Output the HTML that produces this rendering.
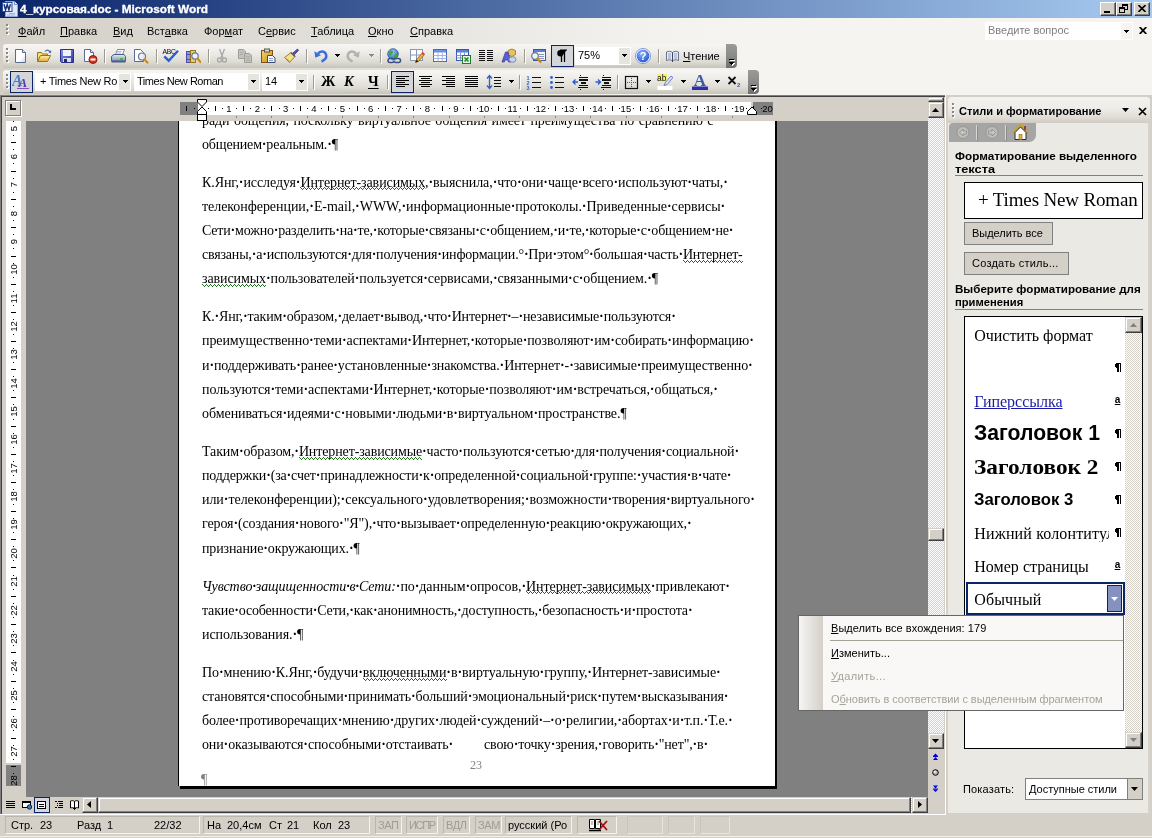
<!DOCTYPE html><html lang="ru"><head><meta charset="utf-8"><title>4_курсовая.doc - Microsoft Word</title><style>
*{box-sizing:border-box;margin:0;padding:0}
html,body{width:1152px;height:838px;overflow:hidden;background:#d4d0c8}
body{position:relative;font-family:"Liberation Sans",sans-serif;font-size:11px;color:#000}
.a{position:absolute}
.t{position:absolute;white-space:nowrap;line-height:1}
u{text-decoration:underline;text-underline-offset:1px}
#title{left:0;top:0;width:1152px;height:18px;background:linear-gradient(90deg,#0a246a 0%,#a6caf0 100%)}
#menubar{left:0;top:18px;width:1152px;height:26px;background:linear-gradient(90deg,#d4d0c8 0%,#dcd9d2 20%,#e9e7e2 40%,#f2f1ed 55%,#f5f4f1 64%,#f5f4f1 100%)}
.cap{position:absolute;top:2px;width:16px;height:14px;background:#d4d0c8;border:1px solid;border-color:#fff #404040 #404040 #fff;box-shadow:inset -1px -1px 0 #808080}
.grip{position:absolute;width:2px;height:2px;background:#8a8880;box-shadow:1px 1px 0 #fff}
.doc{font-family:"Liberation Serif",serif;font-size:14px;color:#000}
.sq{}
</style></head><body><div id="root" style="position:absolute;left:0;top:0;width:1152px;height:838px;will-change:transform">
<div class="a" id="title"></div>
<svg class="a" style="left:1px;top:0px" width="18" height="18" viewBox="0 0 18 18">
<path d="M4.500 1.500h9l3 3v12h-12z" fill="#dfe8fb" stroke="#8ea4d8" stroke-width="1"/>
<path d="M13.500 1.500v3h3" fill="#f4f7ff" stroke="#5a72b4" stroke-width="0.800"/>
<path d="M8 13.500h6M6 15h8" stroke="#9fb2e0" stroke-width="1"/>
<rect x="1.500" y="2.500" width="9.500" height="9" fill="#f2f6ff" stroke="#2c4c9c" stroke-width="1"/>
<path d="M3 4.300l1.500 5.400 1.700-5 1.700 5 1.500-5.400" fill="none" stroke="#17327e" stroke-width="1.500"/>
</svg>
<div class="t" style="left:20px;top:4px;font-weight:bold;color:#fff;font-size:11px;-webkit-text-stroke:0.300px #fff" id="ttl">4_курсовая.doc - Microsoft Word</div>
<div class="cap" style="left:1100px"><div class="a" style="left:3px;top:8px;width:6px;height:2px;background:#000"></div></div>
<div class="cap" style="left:1116px"><svg class="a" style="left:2px;top:1px" width="10" height="10" viewBox="0 0 10 10" shape-rendering="crispEdges"><rect x="3" y="0" width="6" height="2" fill="#000"/><rect x="3" y="0" width="1" height="5" fill="#000"/><rect x="8" y="0" width="1" height="6" fill="#000"/><rect x="3" y="5" width="6" height="1" fill="#000"/><rect x="0" y="3" width="6" height="6" fill="#d4d0c8"/><rect x="0" y="3" width="6" height="2" fill="#000"/><rect x="0" y="3" width="1" height="6" fill="#000"/><rect x="5" y="3" width="1" height="6" fill="#000"/><rect x="0" y="8" width="6" height="1" fill="#000"/></svg></div>
<div class="cap" style="left:1134px"><svg class="a" style="left:3px;top:2px" width="8" height="7" viewBox="0 0 8 7"><path d="M0.5 0L7.5 7M7.5 0L0.5 7" stroke="#000" stroke-width="1.6"/></svg></div>
<div class="a" id="menubar"></div>
<div class="grip" style="left:6px;top:24px"></div>
<div class="grip" style="left:6px;top:28px"></div>
<div class="grip" style="left:6px;top:32px"></div>
<div class="t" id="m0" style="left:18px;top:26px"><u>Ф</u>айл</div>
<div class="t" id="m1" style="left:60px;top:26px"><u>П</u>равка</div>
<div class="t" id="m2" style="left:113px;top:26px"><u>В</u>ид</div>
<div class="t" id="m3" style="left:147px;top:26px">Вст<u>а</u>вка</div>
<div class="t" id="m4" style="left:204px;top:26px">Фор<u>м</u>ат</div>
<div class="t" id="m5" style="left:258px;top:26px">С<u>е</u>рвис</div>
<div class="t" id="m6" style="left:311px;top:26px"><u>Т</u>аблица</div>
<div class="t" id="m7" style="left:368px;top:26px"><u>О</u>кно</div>
<div class="t" id="m8" style="left:410px;top:26px"><u>С</u>правка</div>
<div class="a" style="left:985px;top:22px;width:148px;height:18px;background:#fff"></div>
<div class="t" id="ask" style="left:988px;top:25px;color:#808080">Введите вопрос</div>
<div class="a" style="left:1121px;top:23px;width:11px;height:16px;background:#f5f4f1"></div>
<svg class="a" style="left:1124px;top:30px" width="5" height="3" shape-rendering="crispEdges"><rect x="0" y="0" width="5" height="1"/><rect x="1" y="1" width="3" height="1"/><rect x="2" y="2" width="1" height="1"/></svg>
<svg class="a" style="left:1139px;top:27px" width="8" height="7" viewBox="0 0 8 7"><path d="M0.700 0L7.300 7M7.300 0L0.700 7" stroke="#000" stroke-width="1.800"/></svg>
<style>
.tb{position:absolute;height:24px;border-radius:3px 0 0 3px;background:linear-gradient(180deg,#f7f6f3 0%,#efeeea 30%,#dedbd4 75%,#c6c3ba 100%)}
.tbcap{position:absolute;width:11px;height:24px;border-radius:0 4px 4px 0;background:linear-gradient(180deg,#9a9a98 0%,#8a8a88 50%,#707070 100%)}
.sep{position:absolute;width:1px;height:14px;background:#9d9a90;box-shadow:1px 1px 0 #fff}
.ic{position:absolute;width:16px;height:16px}
.sel{position:absolute;background:#d4d5d8;border:1px solid #0a246a}
.cb{position:absolute;background:#fff;height:18px}
.cbb{position:absolute;width:11px;height:16px;background:#e6e4de}
.dd{position:absolute;width:7px;height:4px}
</style>
<div class="a" style="left:0;top:44px;width:1152px;height:52px;background:linear-gradient(90deg,#d4d0c8 0%,#dcd9d2 20%,#e9e7e2 40%,#f2f1ed 55%,#f5f4f1 64%,#f5f4f1 100%)"></div>
<div class="tb" style="left:3px;top:44px;width:723px"></div><div class="tbcap" style="left:726px;top:44px"></div>
<div class="tb" style="left:3px;top:70px;width:745px"></div><div class="tbcap" style="left:748px;top:70px"></div>
<div class="grip" style="left:6px;top:48px"></div>
<div class="grip" style="left:6px;top:52px"></div>
<div class="grip" style="left:6px;top:56px"></div>
<div class="grip" style="left:6px;top:60px"></div>
<div class="grip" style="left:6px;top:74px"></div>
<div class="grip" style="left:6px;top:78px"></div>
<div class="grip" style="left:6px;top:82px"></div>
<div class="grip" style="left:6px;top:86px"></div>
<svg class="a" style="left:728px;top:58px" width="9" height="9" viewBox="0 0 9 9" shape-rendering="crispEdges"><g fill="#fff" transform="translate(1,1)"><rect x="1" y="1" width="5" height="1"/><rect x="1" y="4" width="5" height="1"/><rect x="2" y="5" width="3" height="1"/><rect x="3" y="6" width="1" height="1"/></g><g fill="#000"><rect x="1" y="1" width="5" height="1"/><rect x="1" y="4" width="5" height="1"/><rect x="2" y="5" width="3" height="1"/><rect x="3" y="6" width="1" height="1"/></g></svg>
<svg class="a" style="left:750px;top:84px" width="9" height="9" viewBox="0 0 9 9" shape-rendering="crispEdges"><g fill="#fff" transform="translate(1,1)"><rect x="1" y="1" width="5" height="1"/><rect x="1" y="4" width="5" height="1"/><rect x="2" y="5" width="3" height="1"/><rect x="3" y="6" width="1" height="1"/></g><g fill="#000"><rect x="1" y="1" width="5" height="1"/><rect x="1" y="4" width="5" height="1"/><rect x="2" y="5" width="3" height="1"/><rect x="3" y="6" width="1" height="1"/></g></svg>
<svg width="0" height="0" style="position:absolute"><defs>
<linearGradient id="gpage" x1="0" y1="0" x2="1" y2="1"><stop offset="0" stop-color="#fff"/><stop offset="0.6" stop-color="#fff"/><stop offset="1" stop-color="#c9d3ea"/></linearGradient>
<linearGradient id="gfold" x1="0" y1="0" x2="0" y2="1"><stop offset="0" stop-color="#fff3b0"/><stop offset="1" stop-color="#e5a82a"/></linearGradient>
<linearGradient id="gblue" x1="0" y1="0" x2="1" y2="1"><stop offset="0" stop-color="#8f9ae8"/><stop offset="1" stop-color="#2b35a8"/></linearGradient>
<linearGradient id="gprn" x1="0" y1="0" x2="0" y2="1"><stop offset="0" stop-color="#e8edf6"/><stop offset="1" stop-color="#7f93bb"/></linearGradient>
<radialGradient id="ghelp" cx="0.4" cy="0.3" r="0.8"><stop offset="0" stop-color="#8fb4ff"/><stop offset="1" stop-color="#1546c8"/></radialGradient>
<radialGradient id="gglobe" cx="0.4" cy="0.3" r="0.8"><stop offset="0" stop-color="#9fd0ff"/><stop offset="1" stop-color="#2560b8"/></radialGradient>
<linearGradient id="gclip" x1="0" y1="0" x2="1" y2="1"><stop offset="0" stop-color="#f5d66a"/><stop offset="1" stop-color="#c98a1a"/></linearGradient>
</defs></svg>
<svg class="a" style="left:13px;top:48px" width="16" height="16" viewBox="0 0 16 16"><path d="M2.5 1.5h7l3 3v10h-10z" fill="url(#gpage)" stroke="#5a6a94"/><path d="M9.5 1.5v3h3" fill="#dfe5f4" stroke="#5a6a94"/></svg>
<svg class="a" style="left:36px;top:48px" width="16" height="16" viewBox="0 0 16 16"><path d="M1.5 13.5v-9h4l1 1.5h5v2" fill="#f7dc7a" stroke="#9a7418"/><path d="M1.5 13.5l3-6h10l-3 6z" fill="url(#gfold)" stroke="#9a7418"/><path d="M9 3.500c1.500-2 4-2 5 0.500" fill="none" stroke="#5a6a94" stroke-width="1.200"/><path d="M15.300 2.300l-0.300 3-2.700-1z" fill="#5a6a94"/></svg>
<svg class="a" style="left:59px;top:48px" width="16" height="16" viewBox="0 0 16 16"><path d="M1.500 1.500h13v13h-12l-1-1z" fill="url(#gblue)" stroke="#2a2f8a"/><rect x="4" y="2" width="8" height="6" fill="#f0f2fb"/><rect x="4" y="10" width="8" height="4" fill="#d8dbe8"/><rect x="5" y="11" width="3" height="3" fill="#23286a"/></svg>
<svg class="a" style="left:82px;top:48px" width="16" height="16" viewBox="0 0 16 16"><path d="M2.500 1.500h6l3 3v9h-9z" fill="url(#gpage)" stroke="#5a6a94"/><path d="M8.500 1.500v3h3" fill="#dfe5f4" stroke="#5a6a94"/><circle cx="11" cy="11.500" r="4" fill="#d8321e" stroke="#8c1a10"/><rect x="8.500" y="10.500" width="5" height="2" fill="#fff"/></svg>
<div class="sep" style="left:104px;top:49px"></div>
<svg class="a" style="left:110px;top:48px" width="16" height="16" viewBox="0 0 16 16"><path d="M5.500 6.500l2-5h7l-2 5z" fill="#fff" stroke="#6a7690" stroke-width="0.900"/><path d="M7.500 3.500h4M7 5h4" stroke="#9aa4bc" stroke-width="0.800"/><path d="M1.500 8.500l2.500-2h10l1.500 2v4.500h-14z" fill="url(#gprn)" stroke="#4a5a84"/><path d="M1.500 13h14v1.500h-14z" fill="#4a5a84"/><rect x="10" y="10" width="3" height="2" fill="#35c035"/></svg>
<svg class="a" style="left:133px;top:48px" width="16" height="16" viewBox="0 0 16 16"><path d="M1.500 1.500h6l3 3v9h-9z" fill="url(#gpage)" stroke="#5a6a94"/><circle cx="9" cy="8.500" r="3.500" fill="#e8f0fb" fill-opacity="0.900" stroke="#6a7690" stroke-width="1.200"/><path d="M11.500 11.500l3 3" stroke="#c98a1a" stroke-width="2.200" stroke-linecap="round"/></svg>
<div class="sep" style="left:156px;top:49px"></div>
<svg class="a" style="left:162px;top:48px" width="17" height="16" viewBox="0 0 17 16"><text x="0.500" y="5.800" font-family="Liberation Sans,sans-serif" font-size="6.800" fill="#000" textLength="13.500">ABC</text><path d="M2.300 8.400l4.400 4.300 9.300-10" fill="none" stroke="#2a5fd0" stroke-width="2.400"/></svg>
<svg class="a" style="left:185px;top:48px" width="16" height="16" viewBox="0 0 16 16"><rect x="1.500" y="3.500" width="4" height="11" fill="#8f95e4" stroke="#4a4fa8"/><rect x="5.500" y="2.500" width="5" height="12" fill="#e8c878" stroke="#9a7418"/><path d="M1.500 6.500h4M1.500 11.500h4" stroke="#4a4fa8"/><circle cx="10" cy="8" r="3.200" fill="#eaf2fc" stroke="#6a7690" stroke-width="1.200"/><path d="M12.500 10.500l3 3.500" stroke="#c98a1a" stroke-width="2.200" stroke-linecap="round"/></svg>
<div class="sep" style="left:208px;top:49px"></div>
<svg class="a" style="left:214px;top:48px" width="16" height="16" viewBox="0 0 16 16"><path d="M5.500 1l3.500 9M10.500 1l-3.500 9" stroke="#a8a8a4" stroke-width="1.300" fill="none"/><circle cx="5.500" cy="12" r="2" fill="none" stroke="#a8a8a4" stroke-width="1.300"/><circle cx="10.500" cy="12" r="2" fill="none" stroke="#a8a8a4" stroke-width="1.300"/></svg>
<svg class="a" style="left:237px;top:48px" width="16" height="16" viewBox="0 0 16 16"><path d="M1.500 1.500h5l2 2v7h-7z" fill="#c4c2bc" stroke="#a09e98"/><path d="M7.500 5.500h5l2 2v7h-7z" fill="#c4c2bc" stroke="#a09e98"/><path d="M3 4.500h3M3 6.500h3M9 8.500h4M9 10.500h4M9 12.500h4" stroke="#a8a6a0" stroke-width="0.800"/></svg>
<svg class="a" style="left:260px;top:48px" width="16" height="16" viewBox="0 0 16 16"><rect x="1.500" y="2.500" width="11" height="12" fill="url(#gclip)" stroke="#7a5410"/><rect x="4.500" y="1" width="5" height="3" fill="#d8d8d8" stroke="#555"/><path d="M7.500 7.500h5l2.500 2.500v4.500h-7.500z" fill="#f4f6fb" stroke="#3a4a74"/><path d="M9 10.500h4M9 12.500h4" stroke="#7f93bb" stroke-width="0.900"/></svg>
<svg class="a" style="left:283px;top:48px" width="16" height="16" viewBox="0 0 16 16"><path d="M10 5l4.500-4 1 1.500-4 4z" fill="#5a4fb8" stroke="#3a2f88" stroke-width="0.800"/><path d="M1.500 9.500l6.500-5 4 4-5.500 6z" fill="#f3e08a" stroke="#9a8428"/><path d="M3.500 10.500l4 3.500" stroke="#b89a38" stroke-width="0.800"/><path d="M8 4.500l4 4" stroke="#555" stroke-width="1.400"/></svg>
<div class="sep" style="left:306px;top:49px"></div>
<svg class="a" style="left:312px;top:48px" width="16" height="16" viewBox="0 0 16 16"><path d="M9.500 13.500C13 12 15 9.500 14 6.500C13 3 8.500 2.200 5.800 5.800" fill="none" stroke="#3c6ee0" stroke-width="2.500"/><path d="M2.300 3.200l1 6.600 5.700-2.600z" fill="#3c6ee0"/></svg>
<svg class="a" style="left:335px;top:54px" width="5" height="3" shape-rendering="crispEdges"><rect x="0" y="0" width="5" height="1" fill="#000"/><rect x="1" y="1" width="3" height="1" fill="#000"/><rect x="2" y="2" width="1" height="1" fill="#000"/></svg>
<svg class="a" style="left:346px;top:48px" width="16" height="16" viewBox="0 0 16 16"><path d="M6.500 13.500C3 12 1 9.500 2 6.500C3 3 7.500 2.200 10.200 5.800" fill="none" stroke="#b4b2ac" stroke-width="2.500"/><path d="M13.700 3.200l-1 6.600-5.700-2.600z" fill="#b4b2ac"/></svg>
<svg class="a" style="left:369px;top:54px" width="5" height="3" shape-rendering="crispEdges"><rect x="0" y="0" width="5" height="1" fill="#8c8a84"/><rect x="1" y="1" width="3" height="1" fill="#8c8a84"/><rect x="2" y="2" width="1" height="1" fill="#8c8a84"/></svg>
<div class="sep" style="left:380px;top:49px"></div>
<svg class="a" style="left:386px;top:48px" width="16" height="16" viewBox="0 0 16 16"><circle cx="7" cy="6" r="5.300" fill="url(#gglobe)" stroke="#2a4f98" stroke-width="0.800"/><path d="M4 3c2-1 3 0 3 1.500s-2 1-2 3-2 0-2-1.500 0-2.300 1-3zM9 6c1-1 2.500 0 2.500 1.500s-1.500 2.500-2.500 2.500-1-3 0-4z" fill="#3fa83f"/><rect x="2" y="10.500" width="6" height="4" rx="2" fill="none" stroke="#3a4f84" stroke-width="1.500"/><rect x="8" y="10.500" width="6.500" height="4" rx="2" fill="none" stroke="#3a4f84" stroke-width="1.500"/><path d="M6 12.500h4" stroke="#9ab0e0" stroke-width="1.200"/></svg>
<svg class="a" style="left:409px;top:48px" width="16" height="16" viewBox="0 0 16 16"><rect x="1.500" y="1.500" width="12" height="11" fill="#fff" stroke="#8a96b6"/><path d="M1.500 7h12M7.500 1.500v11" stroke="#8a96b6"/><path d="M6.500 14.500l1-3 6-7 2 2-6 7z" fill="#f0b040" stroke="#8a5a10" stroke-width="0.800"/><path d="M13 4.500l2 2" stroke="#d84a3a" stroke-width="2"/><path d="M6.500 14.500l1-3 2 2z" fill="#222"/></svg>
<svg class="a" style="left:432px;top:48px" width="16" height="16" viewBox="0 0 16 16"><rect x="1.500" y="1.500" width="13" height="12" fill="#fff" stroke="#4a68c0"/><rect x="2" y="2" width="12" height="2.500" fill="#6a8fe8"/><path d="M1.500 7.500h13M1.500 10.500h13M6 4.500v9M10.300 4.500v9" stroke="#a4b6e4"/></svg>
<svg class="a" style="left:455px;top:48px" width="16" height="16" viewBox="0 0 16 16"><rect x="1.500" y="1.500" width="12" height="11" fill="#fff" stroke="#3a57b0"/><rect x="2" y="2" width="11" height="2.500" fill="#5a7fe0"/><path d="M1.500 7.500h12M1.500 10h12M5.500 4.500v8M9.500 4.500v8" stroke="#7f95d0"/><rect x="7.500" y="7.500" width="8" height="8" fill="#eaf5ea" stroke="#1f7a2a"/><path d="M9.500 9.500l4 4M13.500 9.500l-4 4" stroke="#1f8a2a" stroke-width="1.600"/></svg>
<svg class="a" style="left:478px;top:48px" width="16" height="16" viewBox="0 0 16 16"><rect x="1" y="2" width="6" height="1" fill="#111"/><rect x="9" y="2" width="6" height="1" fill="#111"/><rect x="1" y="4" width="6" height="1" fill="#111"/><rect x="9" y="4" width="6" height="1" fill="#111"/><rect x="1" y="6" width="6" height="1" fill="#111"/><rect x="9" y="6" width="6" height="1" fill="#111"/><rect x="1" y="8" width="6" height="1" fill="#111"/><rect x="9" y="8" width="6" height="1" fill="#111"/><rect x="1" y="10" width="6" height="1" fill="#111"/><rect x="9" y="10" width="6" height="1" fill="#111"/><rect x="1" y="12" width="6" height="1" fill="#111"/><rect x="9" y="12" width="6" height="1" fill="#111"/></svg>
<svg class="a" style="left:501px;top:48px" width="16" height="16" viewBox="0 0 16 16"><path d="M7 2.500l4-1.500 3.500 1.500v4l-3.500 2-4-1.500z" fill="#e8c060" stroke="#9a7418" stroke-width="0.800"/><path d="M1 14l3.500-10h2.500l3 10h-2.500l-0.500-2h-3l-0.700 2z" fill="#5a5fd0" stroke="#33389a" stroke-width="0.700"/><ellipse cx="11.500" cy="11.500" rx="3.500" ry="2.800" fill="#c8d4ea" stroke="#6a7aa4" stroke-width="0.800"/></svg>
<div class="sep" style="left:524px;top:49px"></div>
<svg class="a" style="left:530px;top:48px" width="16" height="16" viewBox="0 0 16 16"><rect x="3.500" y="1.500" width="12" height="11" fill="#f4f6fb" stroke="#3a57b0"/><rect x="4" y="2" width="11" height="2" fill="#5a7fe0"/><path d="M9 6.500h5M9 8.500h5M9 10.500h5" stroke="#8a96b6"/><circle cx="5" cy="8" r="3.300" fill="#eaf2fc" stroke="#6a7690" stroke-width="1.200"/><path d="M7.500 10.500l3 3.500" stroke="#c98a1a" stroke-width="2.200" stroke-linecap="round"/></svg>
<div class="sel" style="left:551px;top:45px;width:23px;height:22px"></div>
<svg class="a" style="left:554px;top:48px" width="16" height="16" viewBox="0 0 16 16"><path d="M10.500 2v12M7.500 2v12" stroke="#000" stroke-width="1.300"/><path d="M12.500 2h-6a3.200 3.200 0 0 0 0 6.500h1.500z" fill="#000"/><path d="M6 2h7" stroke="#000" stroke-width="1"/></svg>
<div class="cb" style="left:575px;top:47px;width:56px"></div><div class="cbb" style="left:619px;top:48px"></div>
<div class="t" id="zm" style="left:578px;top:50px">75%</div>
<svg class="a" style="left:622px;top:54px" width="5" height="3" shape-rendering="crispEdges"><rect x="0" y="0" width="5" height="1" fill="#000"/><rect x="1" y="1" width="3" height="1" fill="#000"/><rect x="2" y="2" width="1" height="1" fill="#000"/></svg>
<svg class="a" style="left:635px;top:48px" width="16" height="16" viewBox="0 0 16 16"><circle cx="8" cy="8" r="7" fill="url(#ghelp)" stroke="#fff" stroke-width="1.200"/><circle cx="8" cy="8" r="7.600" fill="none" stroke="#5a7fd8" stroke-width="0.700"/><text x="8" y="12" text-anchor="middle" font-family="Liberation Sans,sans-serif" font-weight="bold" font-size="11" fill="#fff">?</text></svg>
<div class="sep" style="left:658px;top:49px"></div>
<svg class="a" style="left:666px;top:50px" width="13" height="13" viewBox="0 0 13 13"><path d="M0.500 2c2-1 4.500-1 6 0.500v8.500c-1.500-1.500-4-1.500-6-0.500z" fill="#e8ecf6" stroke="#5a6684" stroke-width="0.900"/><path d="M12.500 2c-2-1-4.500-1-6 0.500v8.500c1.500-1.500 4-1.500 6-0.500z" fill="#e8ecf6" stroke="#5a6684" stroke-width="0.900"/><path d="M2 4h3M2 6h3M2 8h3M8 4h3M8 6h3M8 8h3" stroke="#8a94b4" stroke-width="0.900"/><path d="M6.500 2.500v9.500" stroke="#3a4464" stroke-width="1"/></svg>
<div class="t" id="rd" style="left:683px;top:51px"><u>Ч</u>тение</div>
<div class="sel" style="left:10px;top:71px;width:23px;height:22px"></div>
<svg class="a" style="left:12px;top:73px" width="18" height="17" viewBox="0 0 18 17"><text x="0" y="12.500" font-family="Liberation Serif,serif" font-style="italic" font-weight="bold" font-size="16" fill="#4a7ad0">A</text><text x="6.500" y="14" font-family="Liberation Serif,serif" font-style="italic" font-weight="bold" font-size="13" fill="#5a3a9a">A</text><path d="M5 15.500h12" stroke="#8a4fc0" stroke-width="1"/></svg>
<div class="cb" style="left:35px;top:73px;width:96px"></div><div class="cbb" style="left:119px;top:74px"></div>
<div class="t" style="left:40px;top:76px" id="c1">+ Times New Ro</div>
<svg class="a" style="left:123px;top:80px" width="5" height="3" shape-rendering="crispEdges"><rect x="0" y="0" width="5" height="1" fill="#000"/><rect x="1" y="1" width="3" height="1" fill="#000"/><rect x="2" y="2" width="1" height="1" fill="#000"/></svg>
<div class="cb" style="left:134px;top:73px;width:126px"></div><div class="cbb" style="left:248px;top:74px"></div>
<div class="t" style="left:137px;top:76px" id="c2">Times New Roman</div>
<svg class="a" style="left:251px;top:80px" width="5" height="3" shape-rendering="crispEdges"><rect x="0" y="0" width="5" height="1" fill="#000"/><rect x="1" y="1" width="3" height="1" fill="#000"/><rect x="2" y="2" width="1" height="1" fill="#000"/></svg>
<div class="cb" style="left:262px;top:73px;width:46px"></div><div class="cbb" style="left:296px;top:74px"></div>
<div class="t" style="left:265px;top:76px">14</div>
<svg class="a" style="left:299px;top:80px" width="5" height="3" shape-rendering="crispEdges"><rect x="0" y="0" width="5" height="1" fill="#000"/><rect x="1" y="1" width="3" height="1" fill="#000"/><rect x="2" y="2" width="1" height="1" fill="#000"/></svg>
<div class="sep" style="left:313px;top:75px"></div>
<div class="t" style="left:321px;top:74px;font-family:'Liberation Serif',serif;font-weight:bold;font-size:14.500px">Ж</div>
<div class="t" style="left:344px;top:74px;font-family:'Liberation Serif',serif;font-weight:bold;font-style:italic;font-size:14.500px">К</div>
<div class="t" style="left:368px;top:74px;font-family:'Liberation Serif',serif;font-weight:bold;font-size:14.500px;text-decoration:underline;text-underline-offset:1.500px">Ч</div>
<div class="sep" style="left:387px;top:75px"></div>
<div class="sel" style="left:391px;top:71px;width:23px;height:22px"></div>
<svg class="a" style="left:395px;top:74px" width="16" height="16" viewBox="0 0 16 16"><rect x="1" y="2" width="13" height="1" fill="#000"/><rect x="1" y="4" width="9" height="1" fill="#000"/><rect x="1" y="6" width="13" height="1" fill="#000"/><rect x="1" y="8" width="9" height="1" fill="#000"/><rect x="1" y="10" width="13" height="1" fill="#000"/><rect x="1" y="12" width="9" height="1" fill="#000"/></svg>
<svg class="a" style="left:418px;top:74px" width="16" height="16" viewBox="0 0 16 16"><rect x="1" y="2" width="13" height="1" fill="#000"/><rect x="3" y="4" width="9" height="1" fill="#000"/><rect x="1" y="6" width="13" height="1" fill="#000"/><rect x="3" y="8" width="9" height="1" fill="#000"/><rect x="1" y="10" width="13" height="1" fill="#000"/><rect x="3" y="12" width="9" height="1" fill="#000"/></svg>
<svg class="a" style="left:441px;top:74px" width="16" height="16" viewBox="0 0 16 16"><rect x="1" y="2" width="13" height="1" fill="#000"/><rect x="5" y="4" width="9" height="1" fill="#000"/><rect x="1" y="6" width="13" height="1" fill="#000"/><rect x="5" y="8" width="9" height="1" fill="#000"/><rect x="1" y="10" width="13" height="1" fill="#000"/><rect x="5" y="12" width="9" height="1" fill="#000"/></svg>
<svg class="a" style="left:464px;top:74px" width="16" height="16" viewBox="0 0 16 16"><rect x="1" y="2" width="13" height="1" fill="#000"/><rect x="1" y="4" width="13" height="1" fill="#000"/><rect x="1" y="6" width="13" height="1" fill="#000"/><rect x="1" y="8" width="13" height="1" fill="#000"/><rect x="1" y="10" width="13" height="1" fill="#000"/><rect x="1" y="12" width="13" height="1" fill="#000"/></svg>
<svg class="a" style="left:486px;top:74px" width="16" height="16" viewBox="0 0 16 16"><path d="M3.500 1.500v13M1 4.500l2.500-3 2.500 3M1 11.500l2.500 3 2.500-3" fill="none" stroke="#2a5fd0" stroke-width="1.300"/><path d="M8 3.500h7M8 6.500h7M8 9.500h7M8 12.500h7" stroke="#111" stroke-width="1.100"/></svg>
<svg class="a" style="left:509px;top:80px" width="5" height="3" shape-rendering="crispEdges"><rect x="0" y="0" width="5" height="1" fill="#000"/><rect x="1" y="1" width="3" height="1" fill="#000"/><rect x="2" y="2" width="1" height="1" fill="#000"/></svg>
<div class="sep" style="left:519px;top:75px"></div>
<svg class="a" style="left:526px;top:74px" width="16" height="16" viewBox="0 0 16 16"><path d="M6 3.500h9M6 8.500h9M6 13.500h9" stroke="#111" stroke-width="1.100"/><text x="0.500" y="5.500" font-family="Liberation Sans,sans-serif" font-weight="bold" font-size="5.500" fill="#2a5fd0">1</text><text x="0.500" y="10.500" font-family="Liberation Sans,sans-serif" font-weight="bold" font-size="5.500" fill="#2a5fd0">2</text><text x="0.500" y="15.500" font-family="Liberation Sans,sans-serif" font-weight="bold" font-size="5.500" fill="#2a5fd0">3</text></svg>
<svg class="a" style="left:549px;top:74px" width="16" height="16" viewBox="0 0 16 16"><path d="M6 3.500h9M6 8.500h9M6 13.500h9" stroke="#111" stroke-width="1.100"/><circle cx="2.500" cy="3.500" r="1.400" fill="#2a5fd0"/><circle cx="2.500" cy="8.500" r="1.400" fill="#2a5fd0"/><circle cx="2.500" cy="13.500" r="1.400" fill="#2a5fd0"/></svg>
<svg class="a" style="left:572px;top:74px" width="16" height="16" viewBox="0 0 16 16"><rect x="8" y="1" width="1" height="1" fill="#111"/><rect x="8" y="3" width="1" height="1" fill="#111"/><rect x="8" y="13" width="1" height="1" fill="#111"/><rect x="8" y="15" width="1" height="1" fill="#111"/><rect x="7" y="3" width="9" height="1" fill="#111"/><rect x="7" y="5" width="9" height="2" fill="#111"/><rect x="9" y="8" width="5" height="2" fill="#111"/><rect x="7" y="11" width="9" height="1" fill="#111"/><rect x="6" y="13" width="10" height="1" fill="#111"/><path d="M1 8h5M3.500 5.500l-2.500 2.500 2.500 2.500" fill="none" stroke="#2a5fd0" stroke-width="1.300"/></svg>
<svg class="a" style="left:595px;top:74px" width="16" height="16" viewBox="0 0 16 16"><rect x="8" y="1" width="1" height="1" fill="#111"/><rect x="8" y="3" width="1" height="1" fill="#111"/><rect x="8" y="13" width="1" height="1" fill="#111"/><rect x="8" y="15" width="1" height="1" fill="#111"/><rect x="7" y="3" width="9" height="1" fill="#111"/><rect x="7" y="5" width="9" height="2" fill="#111"/><rect x="9" y="8" width="5" height="2" fill="#111"/><rect x="7" y="11" width="9" height="1" fill="#111"/><rect x="6" y="13" width="10" height="1" fill="#111"/><path d="M0.500 8h5M3 5.500l2.500 2.500-2.500 2.500" fill="none" stroke="#2a5fd0" stroke-width="1.300"/></svg>
<div class="sep" style="left:617px;top:75px"></div>
<svg class="a" style="left:624px;top:74px" width="16" height="16" viewBox="0 0 16 16"><rect x="1.500" y="2.500" width="12" height="12" fill="none" stroke="#111" stroke-width="1.200"/><path d="M7.500 4v10M3 8.500h10" stroke="#555" stroke-dasharray="1 1"/></svg>
<svg class="a" style="left:646px;top:80px" width="5" height="3" shape-rendering="crispEdges"><rect x="0" y="0" width="5" height="1" fill="#000"/><rect x="1" y="1" width="3" height="1" fill="#000"/><rect x="2" y="2" width="1" height="1" fill="#000"/></svg>
<svg class="a" style="left:657px;top:74px" width="16" height="16" viewBox="0 0 16 16"><rect x="0" y="0" width="10" height="8" fill="#f4f07a"/><text x="0" y="7" font-family="Liberation Sans,sans-serif" font-size="8.500" fill="#111">ab</text><path d="M8 9l6-7 2 1.500-6 7-3 1z" fill="#dfe8f8" stroke="#4a6ab0" stroke-width="0.800"/><rect x="0.500" y="12" width="15" height="4" fill="#fff"/></svg>
<svg class="a" style="left:681px;top:80px" width="5" height="3" shape-rendering="crispEdges"><rect x="0" y="0" width="5" height="1" fill="#000"/><rect x="1" y="1" width="3" height="1" fill="#000"/><rect x="2" y="2" width="1" height="1" fill="#000"/></svg>
<svg class="a" style="left:692px;top:74px" width="16" height="16" viewBox="0 0 16 16"><text x="8" y="11.500" text-anchor="middle" font-family="Liberation Serif,serif" font-weight="bold" font-size="17" fill="#3a5aa8">A</text><rect x="0" y="12.500" width="16" height="3.500" fill="#2a2fa8"/></svg>
<svg class="a" style="left:715px;top:80px" width="5" height="3" shape-rendering="crispEdges"><rect x="0" y="0" width="5" height="1" fill="#000"/><rect x="1" y="1" width="3" height="1" fill="#000"/><rect x="2" y="2" width="1" height="1" fill="#000"/></svg>
<svg class="a" style="left:727px;top:74px" width="16" height="16" viewBox="0 0 16 16"><path d="M1.500 3l7 7M8.500 3l-7 7" stroke="#111" stroke-width="1.800"/><text x="10" y="13" font-family="Liberation Sans,sans-serif" font-weight="bold" font-size="6" fill="#2a5fd0">2</text></svg>
<style>
.vr{position:absolute;left:6px;width:15px;text-align:center;font-size:9.5px;line-height:15px;height:15px;transform:rotate(-90deg);white-space:nowrap}
.hr{position:absolute;top:103px;font-size:9.5px;line-height:11px;width:20px;text-align:center;white-space:nowrap}
.btn3{position:absolute;background:#d4d0c8;border:1px solid;border-color:#d4d0c8 #404040 #404040 #d4d0c8;box-shadow:inset -1px -1px 0 #808080,inset 1px 1px 0 #fff}
.trk{position:absolute;background:#eae8e3;background-image:conic-gradient(#fff 25%,#d4d0c8 0 50%,#fff 0 75%,#d4d0c8 0);background-size:2px 2px}
</style>
<div class="a" style="left:0;top:95px;width:946px;height:720px;background:#d4d0c8"></div>
<div class="a" style="left:0;top:95px;width:946px;height:1px;background:#808080"></div>
<div class="a" style="left:1px;top:96px;width:944px;height:1px;background:#404040"></div>
<div class="a" style="left:0;top:95px;width:1px;height:720px;background:#808080"></div>
<div class="a" style="left:1px;top:96px;width:1px;height:718px;background:#404040"></div>
<div class="a" style="left:945px;top:95px;width:1px;height:720px;background:#fff"></div>
<div class="a" style="left:0;top:814px;width:946px;height:1px;background:#fff"></div>
<div class="a" style="left:26px;top:121px;width:902px;height:676px;background:#808080;overflow:hidden" id="docarea">
<div class="a" style="left:152px;top:0;width:599px;height:668px;background:#000"></div>
<div class="a" style="left:153px;top:0;width:596px;height:665px;background:#fff"></div>
<div class="a" style="left:152px;top:665px;width:2px;height:3px;background:#808080"></div>
</div>
<div class="a" style="left:0;top:121px;width:928px;height:676px;overflow:hidden">
<div class="t doc" id="l0" style="left:202px;top:-7.5px;letter-spacing:-0.123px">ради<b>·</b>общения,<b>·</b>поскольку<b>·</b>виртуальное<b>·</b>общения<b>·</b>имеет<b>·</b>преимущества<b>·</b>по<b>·</b>сравнению<b>·</b>с<b>·</b></div>
<div class="t doc" id="l1" style="left:202px;top:16.7px;letter-spacing:-0.168px">общением<b>·</b>реальным.<b>·</b>¶</div>
<div class="t doc" id="l2" style="left:202px;top:54.7px;letter-spacing:-0.089px">К.Янг,<b>·</b>исследуя<b>·</b><span class="sq">Интернет-зависимых</span>,<b>·</b>выяснила,<b>·</b>что<b>·</b>они<b>·</b>чаще<b>·</b>всего<b>·</b>используют<b>·</b>чаты,<b>·</b></div>
<div class="t doc" id="l3" style="left:202px;top:78.8px;letter-spacing:-0.053px">телеконференции,<b>·</b>E-mail,<b>·</b>WWW,<b>·</b>информационные<b>·</b>протоколы.<b>·</b>Приведенные<b>·</b>сервисы<b>·</b></div>
<div class="t doc" id="l4" style="left:202px;top:103.0px;letter-spacing:-0.195px">Сети<b>·</b>можно<b>·</b>разделить<b>·</b>на<b>·</b>те,<b>·</b>которые<b>·</b>связаны<b>·</b>с<b>·</b>общением,<b>·</b>и<b>·</b>те,<b>·</b>которые<b>·</b>с<b>·</b>общением<b>·</b>не<b>·</b></div>
<div class="t doc" id="l5" style="left:202px;top:127.1px;letter-spacing:-0.195px">связаны,<b>·</b>а<b>·</b>используются<b>·</b>для<b>·</b>получения<b>·</b>информации.°<b>·</b>При<b>·</b>этом°<b>·</b>большая<b>·</b>часть<b>·</b><span class="sq">Интернет-</span></div>
<div class="t doc" id="l6" style="left:202px;top:151.3px;letter-spacing:-0.099px"><span class="sq">зависимых</span><b>·</b>пользователей<b>·</b>пользуется<b>·</b>сервисами,<b>·</b>связанными<b>·</b>с<b>·</b>общением.<b>·</b>¶</div>
<div class="t doc" id="l7" style="left:202px;top:189.3px;letter-spacing:-0.162px">К.<b>·</b>Янг,<b>·</b>таким<b>·</b>образом,<b>·</b>делает<b>·</b>вывод,<b>·</b>что<b>·</b>Интернет<b>·</b>–<b>·</b>независимые<b>·</b>пользуются<b>·</b></div>
<div class="t doc" id="l8" style="left:202px;top:213.4px;letter-spacing:-0.094px">преимущественно<b>·</b>теми<b>·</b>аспектами<b>·</b>Интернет,<b>·</b>которые<b>·</b>позволяют<b>·</b>им<b>·</b>собирать<b>·</b>информацию<b>·</b></div>
<div class="t doc" id="l9" style="left:202px;top:237.6px;letter-spacing:-0.111px">и<b>·</b>поддерживать<b>·</b>ранее<b>·</b>установленные<b>·</b>знакомства.<b>·</b>Интернет<b>·</b>-<b>·</b>зависимые<b>·</b>преимущественно<b>·</b></div>
<div class="t doc" id="l10" style="left:202px;top:261.7px;letter-spacing:-0.073px">пользуются<b>·</b>теми<b>·</b>аспектами<b>·</b>Интернет,<b>·</b>которые<b>·</b>позволяют<b>·</b>им<b>·</b>встречаться,<b>·</b>общаться,<b>·</b></div>
<div class="t doc" id="l11" style="left:202px;top:285.9px;letter-spacing:-0.092px">обмениваться<b>·</b>идеями<b>·</b>с<b>·</b>новыми<b>·</b>людьми<b>·</b>в<b>·</b>виртуальном<b>·</b>пространстве.¶</div>
<div class="t doc" id="l12" style="left:202px;top:323.9px;letter-spacing:-0.128px">Таким<b>·</b>образом,<b>·</b><span class="sq">Интернет-зависимые</span><b>·</b>часто<b>·</b>пользуются<b>·</b>сетью<b>·</b>для<b>·</b>получения<b>·</b>социальной<b>·</b></div>
<div class="t doc" id="l13" style="left:202px;top:348.0px;letter-spacing:-0.156px">поддержки<b>·</b>(за<b>·</b>счет<b>·</b>принадлежности<b>·</b>к<b>·</b>определенной<b>·</b>социальной<b>·</b>группе:<b>·</b>участия<b>·</b>в<b>·</b>чате<b>·</b></div>
<div class="t doc" id="l14" style="left:202px;top:372.2px;letter-spacing:-0.057px">или<b>·</b>телеконференции);<b>·</b>сексуального<b>·</b>удовлетворения;<b>·</b>возможности<b>·</b>творения<b>·</b>виртуального<b>·</b></div>
<div class="t doc" id="l15" style="left:202px;top:396.3px;letter-spacing:-0.114px">героя<b>·</b>(создания<b>·</b>нового<b>·</b>"Я"),<b>·</b>что<b>·</b>вызывает<b>·</b>определенную<b>·</b>реакцию<b>·</b>окружающих,<b>·</b></div>
<div class="t doc" id="l16" style="left:202px;top:420.5px;letter-spacing:-0.127px">признание<b>·</b>окружающих.<b>·</b>¶</div>
<div class="t doc" id="l17" style="left:202px;top:458.5px;letter-spacing:-0.086px"><i>Чувство<b>·</b>защищенности<b>·</b>в<b>·</b>Сети:</i><b>·</b>по<b>·</b>данным<b>·</b>опросов,<b>·</b><span class="sq">Интернет-зависимых</span><b>·</b>привлекают<b>·</b></div>
<div class="t doc" id="l18" style="left:202px;top:482.7px;letter-spacing:-0.166px">такие<b>·</b>особенности<b>·</b>Сети,<b>·</b>как<b>·</b>анонимность,<b>·</b>доступность,<b>·</b>безопасность<b>·</b>и<b>·</b>простота<b>·</b></div>
<div class="t doc" id="l19" style="left:202px;top:506.8px;letter-spacing:-0.067px">использования.<b>·</b>¶</div>
<div class="t doc" id="l20" style="left:202px;top:544.9px;letter-spacing:-0.074px">По<b>·</b>мнению<b>·</b>К.Янг,<b>·</b>будучи<b>·</b><span class="sq">включенными</span><b>·</b>в<b>·</b>виртуальную<b>·</b>группу,<b>·</b>Интернет-зависимые<b>·</b></div>
<div class="t doc" id="l21" style="left:202px;top:569.0px;letter-spacing:-0.135px">становятся<b>·</b>способными<b>·</b>принимать<b>·</b>больший<b>·</b>эмоциональный<b>·</b>риск<b>·</b>путем<b>·</b>высказывания<b>·</b></div>
<div class="t doc" id="l22" style="left:202px;top:593.2px;letter-spacing:-0.105px">более<b>·</b>противоречащих<b>·</b>мнению<b>·</b>других<b>·</b>людей<b>·</b>суждений<b>·</b>–<b>·</b>о<b>·</b>религии,<b>·</b>абортах<b>·</b>и<b>·</b>т.п.<b>·</b>Т.е.<b>·</b></div>
<div class="t doc" id="l23" style="left:202px;top:617.3px;letter-spacing:-0.130px">они<b>·</b>оказываются<b>·</b>способными<b>·</b>отстаивать<b>·</b></div>
<div class="t doc" id="l24" style="left:484px;top:617.3px;letter-spacing:-0.144px">свою<b>·</b>точку<b>·</b>зрения,<b>·</b>говорить<b>·</b>"нет",<b>·</b>в<b>·</b></div>
<div class="t" style="left:470px;top:638px;font-family:'Liberation Serif',serif;font-size:12px;color:#808080">23</div>
<div class="t" style="left:201px;top:652px;font-family:'Liberation Serif',serif;font-size:14px;color:#808080">¶</div>
</div>
<div class="a" style="left:180px;top:102px;width:18px;height:13px;background:#808080"></div>
<div class="a" style="left:198px;top:102px;width:553px;height:13px;background:#fff"></div>
<div class="a" style="left:753px;top:102px;width:20px;height:13px;background:#808080"></div>
<div class="hr" style="left:218.9px">1</div>
<div class="hr" style="left:247.3px">2</div>
<div class="hr" style="left:275.6px">3</div>
<div class="hr" style="left:304.0px">4</div>
<div class="hr" style="left:332.4px">5</div>
<div class="hr" style="left:360.7px">6</div>
<div class="hr" style="left:389.1px">7</div>
<div class="hr" style="left:417.4px">8</div>
<div class="hr" style="left:445.8px">9</div>
<div class="hr" style="left:474.1px">10</div>
<div class="hr" style="left:502.5px">11</div>
<div class="hr" style="left:530.8px">12</div>
<div class="hr" style="left:559.1px">13</div>
<div class="hr" style="left:587.5px">14</div>
<div class="hr" style="left:615.9px">15</div>
<div class="hr" style="left:644.2px">16</div>
<div class="hr" style="left:672.6px">17</div>
<div class="hr" style="left:700.9px">18</div>
<div class="hr" style="left:729.2px">19</div>
<div class="hr" style="left:757.6px">20</div>
<svg class="a" style="left:0;top:0" width="946" height="125" viewBox="0 0 946 125"><rect x="186" y="106" width="1" height="5" fill="#000"/><rect x="194" y="108" width="1" height="1" fill="#000"/><rect x="208" y="108" width="1" height="1" fill="#000"/><rect x="215" y="106" width="1" height="5" fill="#000"/><rect x="222" y="108" width="1" height="1" fill="#000"/><rect x="236" y="108" width="1" height="1" fill="#000"/><rect x="243" y="106" width="1" height="5" fill="#000"/><rect x="250" y="108" width="1" height="1" fill="#000"/><rect x="264" y="108" width="1" height="1" fill="#000"/><rect x="271" y="106" width="1" height="5" fill="#000"/><rect x="279" y="108" width="1" height="1" fill="#000"/><rect x="293" y="108" width="1" height="1" fill="#000"/><rect x="300" y="106" width="1" height="5" fill="#000"/><rect x="307" y="108" width="1" height="1" fill="#000"/><rect x="321" y="108" width="1" height="1" fill="#000"/><rect x="328" y="106" width="1" height="5" fill="#000"/><rect x="335" y="108" width="1" height="1" fill="#000"/><rect x="349" y="108" width="1" height="1" fill="#000"/><rect x="357" y="106" width="1" height="5" fill="#000"/><rect x="364" y="108" width="1" height="1" fill="#000"/><rect x="378" y="108" width="1" height="1" fill="#000"/><rect x="385" y="106" width="1" height="5" fill="#000"/><rect x="392" y="108" width="1" height="1" fill="#000"/><rect x="406" y="108" width="1" height="1" fill="#000"/><rect x="413" y="106" width="1" height="5" fill="#000"/><rect x="420" y="108" width="1" height="1" fill="#000"/><rect x="434" y="108" width="1" height="1" fill="#000"/><rect x="442" y="106" width="1" height="5" fill="#000"/><rect x="449" y="108" width="1" height="1" fill="#000"/><rect x="463" y="108" width="1" height="1" fill="#000"/><rect x="470" y="106" width="1" height="5" fill="#000"/><rect x="477" y="108" width="1" height="1" fill="#000"/><rect x="491" y="108" width="1" height="1" fill="#000"/><rect x="498" y="106" width="1" height="5" fill="#000"/><rect x="505" y="108" width="1" height="1" fill="#000"/><rect x="520" y="108" width="1" height="1" fill="#000"/><rect x="527" y="106" width="1" height="5" fill="#000"/><rect x="534" y="108" width="1" height="1" fill="#000"/><rect x="548" y="108" width="1" height="1" fill="#000"/><rect x="555" y="106" width="1" height="5" fill="#000"/><rect x="562" y="108" width="1" height="1" fill="#000"/><rect x="576" y="108" width="1" height="1" fill="#000"/><rect x="583" y="106" width="1" height="5" fill="#000"/><rect x="590" y="108" width="1" height="1" fill="#000"/><rect x="605" y="108" width="1" height="1" fill="#000"/><rect x="612" y="106" width="1" height="5" fill="#000"/><rect x="619" y="108" width="1" height="1" fill="#000"/><rect x="633" y="108" width="1" height="1" fill="#000"/><rect x="640" y="106" width="1" height="5" fill="#000"/><rect x="647" y="108" width="1" height="1" fill="#000"/><rect x="661" y="108" width="1" height="1" fill="#000"/><rect x="668" y="106" width="1" height="5" fill="#000"/><rect x="675" y="108" width="1" height="1" fill="#000"/><rect x="690" y="108" width="1" height="1" fill="#000"/><rect x="697" y="106" width="1" height="5" fill="#000"/><rect x="704" y="108" width="1" height="1" fill="#000"/><rect x="718" y="108" width="1" height="1" fill="#000"/><rect x="725" y="106" width="1" height="5" fill="#000"/><rect x="732" y="108" width="1" height="1" fill="#000"/><rect x="746" y="108" width="1" height="1" fill="#000"/><rect x="753" y="106" width="1" height="5" fill="#000"/><rect x="761" y="108" width="1" height="1" fill="#000"/><rect x="236" y="116" width="1" height="2" fill="#808080"/><rect x="271" y="116" width="1" height="2" fill="#808080"/><rect x="307" y="116" width="1" height="2" fill="#808080"/><rect x="342" y="116" width="1" height="2" fill="#808080"/><rect x="378" y="116" width="1" height="2" fill="#808080"/><rect x="413" y="116" width="1" height="2" fill="#808080"/><rect x="449" y="116" width="1" height="2" fill="#808080"/><rect x="484" y="116" width="1" height="2" fill="#808080"/><rect x="519" y="116" width="1" height="2" fill="#808080"/><rect x="555" y="116" width="1" height="2" fill="#808080"/><rect x="590" y="116" width="1" height="2" fill="#808080"/><rect x="626" y="116" width="1" height="2" fill="#808080"/><rect x="661" y="116" width="1" height="2" fill="#808080"/><rect x="697" y="116" width="1" height="2" fill="#808080"/><rect x="732" y="116" width="1" height="2" fill="#808080"/><path d="M197.5 99.500h9v2.500l-4.500 4.500l-4.500-4.500z" fill="#fff" stroke="#000"/><path d="M197.500 114.500v-3l4.500-4.500l4.500 4.500v3z" fill="#fff" stroke="#000"/><rect x="197.500" y="114.500" width="9" height="6" fill="#fff" stroke="#000"/><path d="M747.500 114.500v-3l4.500-4.500l4.500 4.500v3z" fill="#fff" stroke="#000"/></svg>
<div class="a" style="left:5px;top:100px;width:16px;height:16px;border:1px solid #808080;box-shadow:1px 1px 0 #fff,inset 1px 1px 0 #fff;background:#d4d0c8"></div>
<div class="a" style="left:10px;top:104px;width:2px;height:6px;background:#000"></div><div class="a" style="left:10px;top:108px;width:6px;height:2px;background:#000"></div>
<div class="a" style="left:6px;top:121px;width:15px;height:642px;background:#fff"></div>
<div class="a" style="left:6px;top:765px;width:15px;height:21px;background:#808080"></div>
<div class="vr" style="top:120.5px">5</div>
<div class="vr" style="top:148.8px">6</div>
<div class="vr" style="top:177.2px">7</div>
<div class="vr" style="top:205.6px">8</div>
<div class="vr" style="top:233.9px">9</div>
<div class="vr" style="top:262.2px">10</div>
<div class="vr" style="top:290.6px">11</div>
<div class="vr" style="top:319.0px">12</div>
<div class="vr" style="top:347.3px">13</div>
<div class="vr" style="top:375.6px">14</div>
<div class="vr" style="top:404.0px">15</div>
<div class="vr" style="top:432.4px">16</div>
<div class="vr" style="top:460.7px">17</div>
<div class="vr" style="top:489.1px">18</div>
<div class="vr" style="top:517.4px">19</div>
<div class="vr" style="top:545.8px">20</div>
<div class="vr" style="top:574.1px">21</div>
<div class="vr" style="top:602.5px">22</div>
<div class="vr" style="top:630.8px">23</div>
<div class="vr" style="top:659.1px">24</div>
<div class="vr" style="top:687.5px">25</div>
<div class="vr" style="top:715.9px">26</div>
<div class="vr" style="top:744.2px">27</div>
<div class="vr" style="top:772.6px">28</div>
<svg class="a" style="left:0;top:0" width="26" height="800" viewBox="0 0 26 800"><rect x="13" y="121" width="1" height="1" fill="#000"/><rect x="13" y="135" width="1" height="1" fill="#000"/><rect x="11" y="142" width="5" height="1" fill="#000"/><rect x="13" y="149" width="1" height="1" fill="#000"/><rect x="13" y="163" width="1" height="1" fill="#000"/><rect x="11" y="171" width="5" height="1" fill="#000"/><rect x="13" y="178" width="1" height="1" fill="#000"/><rect x="13" y="192" width="1" height="1" fill="#000"/><rect x="11" y="199" width="5" height="1" fill="#000"/><rect x="13" y="206" width="1" height="1" fill="#000"/><rect x="13" y="220" width="1" height="1" fill="#000"/><rect x="11" y="227" width="5" height="1" fill="#000"/><rect x="13" y="234" width="1" height="1" fill="#000"/><rect x="13" y="248" width="1" height="1" fill="#000"/><rect x="11" y="256" width="5" height="1" fill="#000"/><rect x="13" y="263" width="1" height="1" fill="#000"/><rect x="13" y="277" width="1" height="1" fill="#000"/><rect x="11" y="284" width="5" height="1" fill="#000"/><rect x="13" y="291" width="1" height="1" fill="#000"/><rect x="13" y="305" width="1" height="1" fill="#000"/><rect x="11" y="312" width="5" height="1" fill="#000"/><rect x="13" y="319" width="1" height="1" fill="#000"/><rect x="13" y="334" width="1" height="1" fill="#000"/><rect x="11" y="341" width="5" height="1" fill="#000"/><rect x="13" y="348" width="1" height="1" fill="#000"/><rect x="13" y="362" width="1" height="1" fill="#000"/><rect x="11" y="369" width="5" height="1" fill="#000"/><rect x="13" y="376" width="1" height="1" fill="#000"/><rect x="13" y="390" width="1" height="1" fill="#000"/><rect x="11" y="397" width="5" height="1" fill="#000"/><rect x="13" y="404" width="1" height="1" fill="#000"/><rect x="13" y="419" width="1" height="1" fill="#000"/><rect x="11" y="426" width="5" height="1" fill="#000"/><rect x="13" y="433" width="1" height="1" fill="#000"/><rect x="13" y="447" width="1" height="1" fill="#000"/><rect x="11" y="454" width="5" height="1" fill="#000"/><rect x="13" y="461" width="1" height="1" fill="#000"/><rect x="13" y="475" width="1" height="1" fill="#000"/><rect x="11" y="482" width="5" height="1" fill="#000"/><rect x="13" y="489" width="1" height="1" fill="#000"/><rect x="13" y="504" width="1" height="1" fill="#000"/><rect x="11" y="511" width="5" height="1" fill="#000"/><rect x="13" y="518" width="1" height="1" fill="#000"/><rect x="13" y="532" width="1" height="1" fill="#000"/><rect x="11" y="539" width="5" height="1" fill="#000"/><rect x="13" y="546" width="1" height="1" fill="#000"/><rect x="13" y="560" width="1" height="1" fill="#000"/><rect x="11" y="567" width="5" height="1" fill="#000"/><rect x="13" y="575" width="1" height="1" fill="#000"/><rect x="13" y="589" width="1" height="1" fill="#000"/><rect x="11" y="596" width="5" height="1" fill="#000"/><rect x="13" y="603" width="1" height="1" fill="#000"/><rect x="13" y="617" width="1" height="1" fill="#000"/><rect x="11" y="624" width="5" height="1" fill="#000"/><rect x="13" y="631" width="1" height="1" fill="#000"/><rect x="13" y="645" width="1" height="1" fill="#000"/><rect x="11" y="652" width="5" height="1" fill="#000"/><rect x="13" y="660" width="1" height="1" fill="#000"/><rect x="13" y="674" width="1" height="1" fill="#000"/><rect x="11" y="681" width="5" height="1" fill="#000"/><rect x="13" y="688" width="1" height="1" fill="#000"/><rect x="13" y="702" width="1" height="1" fill="#000"/><rect x="11" y="709" width="5" height="1" fill="#000"/><rect x="13" y="716" width="1" height="1" fill="#000"/><rect x="13" y="730" width="1" height="1" fill="#000"/><rect x="11" y="738" width="5" height="1" fill="#000"/><rect x="13" y="745" width="1" height="1" fill="#000"/><rect x="13" y="759" width="1" height="1" fill="#000"/><rect x="11" y="766" width="5" height="1" fill="#000"/><rect x="13" y="773" width="1" height="1" fill="#000"/></svg>
<div class="trk" style="left:928px;top:97px;width:16px;height:700px"></div>
<div class="btn3" style="left:928px;top:97px;width:16px;height:5px;border-width:1px"></div>
<div class="btn3" style="left:928px;top:102px;width:16px;height:16px"></div>
<svg class="a" style="left:932px;top:108px" width="7" height="4"><path d="M0 4h7l-3.500-4z" fill="#000"/></svg>
<div class="btn3" style="left:928px;top:528px;width:16px;height:13px"></div>
<div class="btn3" style="left:928px;top:733px;width:16px;height:16px"></div>
<svg class="a" style="left:932px;top:739px" width="7" height="4"><path d="M0 0h7l-3.500 4z" fill="#000"/></svg>
<div class="a" style="left:928px;top:749px;width:17px;height:65px;background:#d4d0c8"></div>
<svg class="a" style="left:931px;top:752px" width="9" height="44" viewBox="0 0 9 44"><path d="M4.500 1.500l2.500 2.500h-5zM4.500 5l2.500 3h-5z" fill="#0000e0"/><path d="M2 4.500h5" stroke="#0000e0"/><circle cx="4.500" cy="20.500" r="2.800" fill="#b8b8b8" stroke="#000" stroke-width="1"/><circle cx="3.700" cy="19.700" r="1" fill="#fff"/><path d="M4.500 40l2.500-2.500h-5zM4.500 36.500l2.500-3h-5z" fill="#0000e0"/><path d="M2 37h5" stroke="#0000e0"/></svg>
<style>
.pb{position:absolute;font-weight:bold;white-space:nowrap;line-height:1}
.fbtn{position:absolute;height:23px;background:#d4d0c8;border:1px solid #808080;line-height:21px;padding-left:7px;white-space:nowrap}
.it{position:absolute;left:974.300px;white-space:nowrap;line-height:1;font-family:"Liberation Serif",serif;font-size:16px}
.sy{position:absolute;left:1113px;width:9px;text-align:center;font-size:10px;font-weight:bold;line-height:1}
.mi{position:absolute;left:831px;white-space:nowrap;line-height:1}
</style>
<div class="a" style="left:946px;top:95px;width:206px;height:720px;background:#d4d0c8"></div>
<div class="a" style="left:948px;top:97px;width:202px;height:716px;background:#ebe9e4;border-radius:4px 4px 0 0"></div>
<div class="a" style="left:948px;top:97px;width:202px;height:26px;border-radius:4px 4px 0 0;background:linear-gradient(180deg,#f3f2ee 0%,#efede9 40%,#e2dfd9 75%,#cfcbc3 100%)"></div>
<div class="a" style="left:1148px;top:123px;width:2px;height:690px;background:#d6d3cc"></div>
<div class="grip" style="left:952px;top:103px"></div>
<div class="grip" style="left:952px;top:107px"></div>
<div class="grip" style="left:952px;top:111px"></div>
<div class="grip" style="left:952px;top:115px"></div>
<div class="pb" id="ptitle" style="left:959px;top:106px">Стили и форматирование</div>
<svg class="a" style="left:1122px;top:108px" width="7" height="4"><path d="M0 0h7l-3.500 4z" fill="#000"/></svg>
<svg class="a" style="left:1138px;top:107px" width="9" height="9" viewBox="0 0 9 9"><path d="M1 1l7 7M8 1l-7 7" stroke="#000" stroke-width="1.700"/></svg>
<div class="a" style="left:949px;top:123px;width:87px;height:19px;background:#a5a5a5;border-radius:4px 0 7px 0"></div>
<svg class="a" style="left:949px;top:123px" width="87" height="19" viewBox="0 0 87 19">
<circle cx="14" cy="9.500" r="6" fill="#c0beb9" stroke="#989694"/><path d="M10.500 9.500l3.500-3.500v2h3.500v3h-3.500v2z" fill="#c8c8c6" stroke="#8a8a88" stroke-width="0.800"/>
<rect x="27" y="2" width="1" height="15" fill="#d8d8d6"/><rect x="28" y="3" width="1" height="15" fill="#8c8c8a"/>
<circle cx="43" cy="9.500" r="6" fill="#c0beb9" stroke="#989694"/><path d="M46.500 9.500l-3.500-3.500v2h-3.500v3h3.500v2z" fill="#c8c8c6" stroke="#8a8a88" stroke-width="0.800"/>
<rect x="56" y="2" width="1" height="15" fill="#d8d8d6"/><rect x="57" y="3" width="1" height="15" fill="#8c8c8a"/>
<path d="M64 10l7.500-7.500 7.500 7.500" fill="none" stroke="#c9a020" stroke-width="2"/><path d="M66 9.500l5.500-5.500 5.500 5.500v7h-11z" fill="#fff" stroke="#222a44" stroke-width="1"/><rect x="70" y="11.500" width="3" height="5" fill="#e5b030" stroke="#8a6a10" stroke-width="0.600"/><rect x="75" y="3" width="2" height="4" fill="#a83a2a"/>
</svg>
<div class="pb" id="ps1" style="left:955px;top:151px">Форматирование выделенного</div>
<div class="pb" id="ps1b" style="left:955px;top:164px">текста</div>
<div class="a" style="left:955px;top:175px;width:188px;height:1px;background:#808080"></div>
<div class="a" style="left:964px;top:182px;width:179px;height:37px;background:#fff;border:1px solid #000"></div>
<div class="t" id="pv" style="left:978px;top:190px;font-family:'Liberation Serif',serif;font-size:19px">+ Times New Roman</div>
<div class="fbtn" style="left:964px;top:222px;width:89px"><span id="b1">Выделить все</span></div>
<div class="fbtn" style="left:964px;top:252px;width:105px"><span id="b2">Создать стиль...</span></div>
<div class="pb" id="ps2" style="left:955px;top:284px">Выберите форматирование для</div>
<div class="pb" id="ps2b" style="left:955px;top:297px">применения</div>
<div class="a" style="left:955px;top:309px;width:188px;height:1px;background:#808080"></div>
<div class="a" style="left:964px;top:316px;width:179px;height:433px;background:#fff;border:1px solid #000"></div>
<div class="trk" style="left:1125px;top:317px;width:17px;height:431px"></div>
<div class="btn3" style="left:1125px;top:317px;width:17px;height:16px"></div>
<svg class="a" style="left:1130px;top:323px" width="7" height="4"><path d="M0 4h7l-3.500-4z" fill="#808080"/></svg>
<div class="btn3" style="left:1125px;top:732px;width:17px;height:16px"></div>
<svg class="a" style="left:1130px;top:738px" width="7" height="4"><path d="M0 0h7l-3.500 4z" fill="#808080"/></svg>
<div class="a" style="left:965px;top:317px;width:148px;height:430px;overflow:hidden"></div>
<div class="it" id="it0" style="top:327.5px;;max-width:134.500px;overflow:hidden">Очистить формат</div>
<svg class="a" style="left:1115px;top:363px" width="6" height="9" viewBox="0 0 6 9" shape-rendering="crispEdges"><rect x="1" y="0" width="5" height="1"/><rect x="0" y="1" width="3" height="3"/><rect x="1" y="4" width="2" height="1"/><rect x="2" y="0" width="2" height="9"/><rect x="5" y="0" width="1" height="9"/></svg>
<div class="it" id="it2" style="top:393.5px;;max-width:134.500px;overflow:hidden"><span style="color:#1a1aa6;text-decoration:underline">Гиперссылка</span></div>
<div class="sy" style="top:395px;text-decoration:underline">a</div>
<div class="it" id="it3" style="top:422.0px;left:973.500px;font-family:'Liberation Sans',sans-serif;font-weight:bold;font-size:22px;max-width:134.500px;overflow:hidden">Заголовок 1</div>
<svg class="a" style="left:1115px;top:429px" width="6" height="9" viewBox="0 0 6 9" shape-rendering="crispEdges"><rect x="1" y="0" width="5" height="1"/><rect x="0" y="1" width="3" height="3"/><rect x="1" y="4" width="2" height="1"/><rect x="2" y="0" width="2" height="9"/><rect x="5" y="0" width="1" height="9"/></svg>
<div class="it" id="it4" style="top:455.5px;left:973.500px;font-weight:bold;font-size:22px;max-width:134.500px;overflow:hidden">Заголовок 2</div>
<svg class="a" style="left:1115px;top:462px" width="6" height="9" viewBox="0 0 6 9" shape-rendering="crispEdges"><rect x="1" y="0" width="5" height="1"/><rect x="0" y="1" width="3" height="3"/><rect x="1" y="4" width="2" height="1"/><rect x="2" y="0" width="2" height="9"/><rect x="5" y="0" width="1" height="9"/></svg>
<div class="it" id="it5" style="top:491.3px;left:973.500px;font-family:'Liberation Sans',sans-serif;font-weight:bold;font-size:17px;max-width:134.500px;overflow:hidden">Заголовок 3</div>
<svg class="a" style="left:1115px;top:495px" width="6" height="9" viewBox="0 0 6 9" shape-rendering="crispEdges"><rect x="1" y="0" width="5" height="1"/><rect x="0" y="1" width="3" height="3"/><rect x="1" y="4" width="2" height="1"/><rect x="2" y="0" width="2" height="9"/><rect x="5" y="0" width="1" height="9"/></svg>
<div class="it" id="it6" style="top:525.5px;;max-width:134.500px;overflow:hidden">Нижний колонтитул</div>
<svg class="a" style="left:1115px;top:528px" width="6" height="9" viewBox="0 0 6 9" shape-rendering="crispEdges"><rect x="1" y="0" width="5" height="1"/><rect x="0" y="1" width="3" height="3"/><rect x="1" y="4" width="2" height="1"/><rect x="2" y="0" width="2" height="9"/><rect x="5" y="0" width="1" height="9"/></svg>
<div class="it" id="it7" style="top:558.5px;;max-width:134.500px;overflow:hidden">Номер страницы</div>
<div class="sy" style="top:560px;text-decoration:underline">a</div>
<div class="it" id="it8" style="top:591.5px;;max-width:134.500px;overflow:hidden">Обычный</div>
<div class="a" style="left:966px;top:582px;width:159px;height:33px;border:2px solid #0a246a"></div>
<div class="a" style="left:1107px;top:585px;width:15px;height:27px;background:#8592c0;border:1px solid #0a246a"></div>
<svg class="a" style="left:1111px;top:597px" width="7" height="4"><path d="M0 0h7l-3.500 4z" fill="#fff"/></svg>
<div class="t" id="sh1" style="left:963px;top:784px">Показать:</div>
<div class="a" style="left:1025px;top:778px;width:118px;height:22px;background:#fff;border:1px solid #808080"></div>
<div class="t" id="sh2" style="left:1029px;top:784px">Доступные стили</div>
<div class="a" style="left:1127px;top:779px;width:15px;height:20px;background:#d4d0c8;border-left:1px solid #808080"></div>
<svg class="a" style="left:1131px;top:787px" width="7" height="4"><path d="M0 0h7l-3.500 4z" fill="#000"/></svg>
<div class="a" style="left:798px;top:615px;width:326px;height:96px;background:#f9f8f7;border:1px solid #666"></div>
<div class="a" style="left:799px;top:616px;width:24px;height:94px;background:linear-gradient(90deg,#f6f5f3,#d4d0c8)"></div>
<div class="mi" id="mi1" style="top:623px"><u>В</u>ыделить все вхождения: 179</div>
<div class="a" style="left:830px;top:640px;width:293px;height:1px;background:#a6a398"></div>
<div class="mi" id="mi2" style="top:648px"><u>И</u>зменить...</div>
<div class="mi" id="mi3" style="top:671px;color:#a6a398"><u>У</u>далить...</div>
<div class="mi" id="mi4" style="top:694px;color:#a6a398">О<u>б</u>новить в соответствии с выделенным фрагментом</div>
<div class="a" style="left:2px;top:797px;width:926px;height:16px;background:#d4d0c8"></div>
<svg class="a" style="left:6px;top:800px" width="11" height="10" viewBox="0 0 11 10"><path d="M0 1.500h9M0 3.500h9M0 5.500h9M0 7.500h9" stroke="#000"/></svg>
<svg class="a" style="left:22px;top:800px" width="11" height="10" viewBox="0 0 11 10"><rect x="0.500" y="1.500" width="8" height="6" fill="#fff" stroke="#000"/><rect x="1" y="1" width="8" height="2" fill="#000"/><circle cx="7.500" cy="7" r="2.200" fill="#3a7ad0" stroke="#123"/></svg>
<div class="a" style="left:34px;top:797px;width:16px;height:16px;background:#d4d7e0;border:1px solid #0a246a"></div>
<svg class="a" style="left:37px;top:800px" width="11" height="10" viewBox="0 0 11 10"><rect x="0.500" y="1.500" width="8" height="7" fill="#fff" stroke="#000"/><path d="M2 4.500h5M2 6.500h5" stroke="#000"/></svg>
<svg class="a" style="left:54px;top:800px" width="11" height="10" viewBox="0 0 11 10"><path d="M1 1.500h2M4 1.500h5M3 3.500h1M5 3.500h4M3 5.500h1M5 5.500h4M1 7.500h2M4 7.500h5" stroke="#000"/></svg>
<svg class="a" style="left:70px;top:800px" width="11" height="10" viewBox="0 0 11 10"><path d="M0.500 1c1.500-0.500 3-0.500 4 0.500v7c-1-1-2.500-1-4-0.500zM8.500 1c-1.500-0.500-3-0.500-4 0.500v7c1-1 2.500-1 4-0.500z" fill="#fff" stroke="#000"/><path d="M4.500 6v3.500M3 8l1.500 1.500 1.500-1.500" stroke="#000" fill="none"/></svg>
<div class="trk" style="left:82px;top:797px;width:846px;height:16px"></div>
<div class="btn3" style="left:82px;top:797px;width:16px;height:16px"></div>
<svg class="a" style="left:87px;top:801px" width="4" height="7"><path d="M4 0v7l-4-3.500z" fill="#000"/></svg>
<div class="btn3" style="left:98px;top:797px;width:813px;height:16px"></div>
<div class="btn3" style="left:912px;top:797px;width:16px;height:16px"></div>
<svg class="a" style="left:918px;top:801px" width="4" height="7"><path d="M0 0v7l4-3.500z" fill="#000"/></svg>
<div class="a" style="left:0;top:815px;width:1152px;height:23px;background:#d4d0c8"></div>
<div class="a" style="left:5px;top:816px;width:195px;height:18px;border:1px solid;border-color:#bab6ac #f4f3f0 #f4f3f0 #bab6ac"></div>
<div class="a" style="left:203px;top:816px;width:167px;height:18px;border:1px solid;border-color:#bab6ac #f4f3f0 #f4f3f0 #bab6ac"></div>
<div class="t" style="left:11px;top:820px;color:#000">Стр.</div>
<div class="t" style="left:40px;top:820px;color:#000">23</div>
<div class="t" style="left:77px;top:820px;color:#000">Разд</div>
<div class="t" style="left:107px;top:820px;color:#000">1</div>
<div class="t" style="left:154px;top:820px;color:#000">22/32</div>
<div class="t" style="left:207px;top:820px;color:#000">На</div>
<div class="t" style="left:227px;top:820px;color:#000">20,4см</div>
<div class="t" style="left:269px;top:820px;color:#000">Ст</div>
<div class="t" style="left:287px;top:820px;color:#000">21</div>
<div class="t" style="left:313px;top:820px;color:#000">Кол</div>
<div class="t" style="left:338px;top:820px;color:#000">23</div>
<div class="a" style="left:375px;top:816px;width:27px;height:18px;border:1px solid;border-color:#bab6ac #f4f3f0 #f4f3f0 #bab6ac"></div>
<div class="t" style="left:378px;top:820px;color:#a09c92;letter-spacing:-0.4px">ЗАП</div>
<div class="a" style="left:406px;top:816px;width:32px;height:18px;border:1px solid;border-color:#bab6ac #f4f3f0 #f4f3f0 #bab6ac"></div>
<div class="t" style="left:409px;top:820px;color:#a09c92;letter-spacing:-1.300px">ИСПР</div>
<div class="a" style="left:443px;top:816px;width:27px;height:18px;border:1px solid;border-color:#bab6ac #f4f3f0 #f4f3f0 #bab6ac"></div>
<div class="t" style="left:446px;top:820px;color:#a09c92;letter-spacing:-0.4px">ВДЛ</div>
<div class="a" style="left:475px;top:816px;width:27px;height:18px;border:1px solid;border-color:#bab6ac #f4f3f0 #f4f3f0 #bab6ac"></div>
<div class="t" style="left:478px;top:820px;color:#a09c92;letter-spacing:-0.4px">ЗАМ</div>
<div class="a" style="left:505px;top:816px;width:67px;height:18px;border:1px solid;border-color:#bab6ac #f4f3f0 #f4f3f0 #bab6ac"></div>
<div class="t" style="left:508px;top:820px;color:#000">русский (Ро</div>
<div class="a" style="left:577px;top:816px;width:40px;height:18px;border:1px solid;border-color:#bab6ac #f4f3f0 #f4f3f0 #bab6ac"></div>
<svg class="a" style="left:588px;top:817px" width="21" height="15" viewBox="0 0 21 15"><path d="M1.500 2.500h5v9h-5zM7.500 2.500h5v9h-5z" fill="#fff" stroke="#000"/><path d="M1 13.500h12" stroke="#000" stroke-width="1.500"/><path d="M3 5h2M3 7h2M9 5h2M9 7h2" stroke="#666" stroke-width="0.800"/><path d="M11 4l8 9M19 4l-8 9" stroke="#a01010" stroke-width="1.800"/></svg>
<div class="a" style="left:627px;top:816px;width:36px;height:18px;border:1px solid;border-color:#c8c4bb #e6e4df #e6e4df #c8c4bb"></div>
<div class="a" style="left:668px;top:816px;width:27px;height:18px;border:1px solid;border-color:#c8c4bb #e6e4df #e6e4df #c8c4bb"></div>
<div class="a" style="left:700px;top:816px;width:30px;height:18px;border:1px solid;border-color:#c8c4bb #e6e4df #e6e4df #c8c4bb"></div>
<div class="a" style="left:0;top:836px;width:1152px;height:1px;background:#f0efec"></div>
<style>#c1{letter-spacing:-0.286px}#c2{letter-spacing:-0.475px}#zm{letter-spacing:-0.010px}#rd{letter-spacing:-0.019px}#ask{letter-spacing:-0.009px}#pv{letter-spacing:-0.154px}#b1{letter-spacing:-0.029px}#b2{letter-spacing:0.227px}#mi1{letter-spacing:0.050px}#mi2{letter-spacing:0.018px}#mi3{letter-spacing:0.383px}#mi4{letter-spacing:-0.049px}#sh1{letter-spacing:0.165px}#sh2{letter-spacing:-0.015px}#it0{letter-spacing:-0.036px}#it2{letter-spacing:-0.022px}#it7{letter-spacing:0.020px}#it8{letter-spacing:0.118px}#it6{letter-spacing:0.140px}</style>
<style>#ttl{transform:scaleX(1.0726);transform-origin:0 0}#ptitle{transform:scaleX(1.0067);transform-origin:0 0}#ps1{transform:scaleX(1.0638);transform-origin:0 0}#ps1b{transform:scaleX(1.1595);transform-origin:0 0}#ps2{transform:scaleX(1.0523);transform-origin:0 0}#ps2b{transform:scaleX(1.0184);transform-origin:0 0}#it3{transform:scaleX(0.9623);transform-origin:0 0}#it4{transform:scaleX(1.0599);transform-origin:0 0}#it5{transform:scaleX(0.9813);transform-origin:0 0}</style>
<svg class="a" style="left:0;top:121px" width="928" height="676" viewBox="0 121 928 676"><defs><pattern id="zz" width="4" height="3" patternUnits="userSpaceOnUse"><rect x="0" y="0" width="1" height="1" fill="#1e6e1e"/><rect x="1" y="1" width="1" height="1" fill="#1e6e1e"/><rect x="2" y="2" width="1" height="1" fill="#1e6e1e"/><rect x="3" y="1" width="1" height="1" fill="#1e6e1e"/></pattern></defs><g transform="translate(300,187)"><rect x="0" y="0" width="125" height="3" fill="url(#zz)"/></g><g transform="translate(683,260)"><rect x="0" y="0" width="60" height="3" fill="url(#zz)"/></g><g transform="translate(202,284)"><rect x="0" y="0" width="64" height="3" fill="url(#zz)"/></g><g transform="translate(299,457)"><rect x="0" y="0" width="123" height="3" fill="url(#zz)"/></g><g transform="translate(526,591)"><rect x="0" y="0" width="125" height="3" fill="url(#zz)"/></g><g transform="translate(363,678)"><rect x="0" y="0" width="84" height="3" fill="url(#zz)"/></g></svg>
</div></body></html>
